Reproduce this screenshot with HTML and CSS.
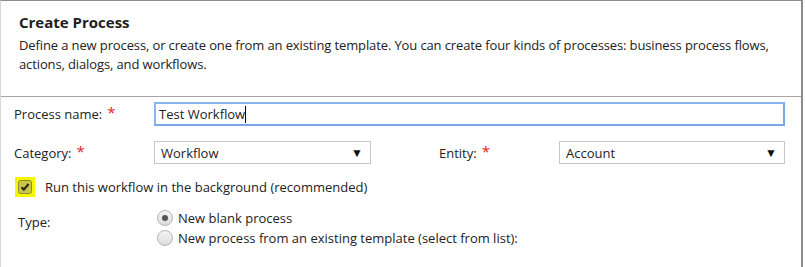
FILE: index.html
```html
<!DOCTYPE html>
<html lang="en">
<head>
    <meta charset="UTF-8">
    <title>Create Process</title>
    <link rel="stylesheet" href="styles.css">
</head>
<body>
    <div class="dialog">
        <div class="dialog-header">
            <h2>Create Process</h2>
            <p>Define a new process, or create one from an existing template. You can create four kinds of processes: business process flows, actions, dialogs, and workflows.</p>
        </div>

        <div class="form">
            <label class="field-label">Process name: <span class="req">*</span></label>
            <div class="name-input">Test Workflow<span class="caret"></span></div>

            <label class="field-label">Category: <span class="req">*</span></label>
            <div class="select">Workflow<span class="arrow">▼</span></div>
            <label class="field-label entity-label">Entity: <span class="req">*</span></label>
            <div class="select">Account<span class="arrow">▼</span></div>

            <div class="check-row">
                <span class="highlight">
                    <svg width="14" height="14" viewBox="0 0 14 14">
                        <rect x="0.5" y="0.5" width="13" height="13" rx="2" fill="#c9c64a" stroke="#8f8c2e"/>
                        <path d="M3.5 7.2 L5.8 9.6 L10.6 4" fill="none" stroke="#2b2b10" stroke-width="2.2"/>
                    </svg>
                </span>
                <span>Run this workflow in the background (recommended)</span>
            </div>

            <div class="type-label">Type:</div>
            <div class="radios">
                <div class="radio-row"><span class="radio checked"></span>New blank process</div>
                <div class="radio-row"><span class="radio"></span>New process from an existing template (select from list):</div>
            </div>
        </div>
    </div>
</body>
</html>
```

FILE: styles.css
```css
body {
    margin: 0;
    font-family: 'Open Sans', 'Noto Sans', sans-serif;
    color: #222;
    background: #fff;
}

.dialog {
    width: 800px;
    height: 266px;
    border-top: 1px solid #8c8c8c;
    border-left: 1px solid #d8d8d8;
    border-right: 2px solid #8c8c8c;
}

.dialog-header {
    padding: 10px 4px 10px 18px;
    height: 75px;
    border-bottom: 1px solid #a6a6a6;
}

.dialog-header h2 {
    margin: 0;
    font-size: 15px;
    font-weight: bold;
    line-height: 22px;
    color: #1e1e1e;
}

.dialog-header p {
    margin: 3px 0 0 0;
    font-size: 13px;
    line-height: 19px;
    letter-spacing: -0.12px;
    color: #222;
}

.form {
    display: grid;
    grid-template-columns: 140px 217px 188px 226px;
    row-gap: 15px;
    padding: 5px 0 0 13px;
    font-size: 13px;
}

.field-label {
    display: flex;
    align-items: center;
    color: #222;
}

.req {
    color: #e8202a;
    font-size: 15px;
    margin-left: 5px;
    margin-top: -4px;
}

.entity-label {
    padding-left: 68px;
}

.name-input {
    grid-column: 2 / 5;
    height: 20px;
    border: 2px solid #7aa7e8;
    border-color: #8bb3ee #7aa7e8 #7aa7e8 #8bb3ee;
    padding-left: 3px;
    line-height: 20px;
    display: flex;
    align-items: center;
}

.caret {
    display: inline-block;
    width: 1px;
    height: 17px;
    background: #000;
}

.select {
    height: 21px;
    border: 1px solid #c6c6c6;
    padding: 0 7px 0 6px;
    display: flex;
    align-items: center;
    justify-content: space-between;
}

.arrow {
    font-size: 12px;
    color: #111;
}

.check-row {
    grid-column: 1 / 5;
    display: flex;
    align-items: center;
    gap: 10px;
    margin-top: -2px;
    margin-left: 1px;
}

.highlight {
    width: 20px;
    height: 20px;
    background: #f6f600;
    display: flex;
    align-items: center;
    justify-content: center;
}

.type-label {
    padding: 1px 0 0 4px;
}

.radios {
    grid-column: 2 / 5;
    display: flex;
    flex-direction: column;
    gap: 4px;
    margin-top: -2px;
}

.radio-row {
    display: flex;
    align-items: center;
    gap: 5px;
    line-height: 16px;
}

.radio {
    width: 14px;
    height: 14px;
    border-radius: 50%;
    border: 1px solid #b5b5b5;
    background: linear-gradient(#f4f4f4, #dcdcdc);
    margin-left: 3px;
    position: relative;
}

.radio.checked::after {
    content: "";
    position: absolute;
    left: 4px;
    top: 4px;
    width: 6px;
    height: 6px;
    border-radius: 50%;
    background: #555;
}
```
